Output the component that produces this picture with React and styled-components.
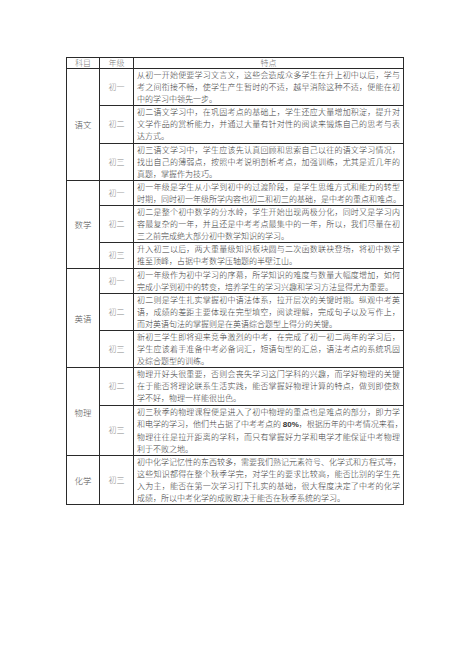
import React from "react";
import styled, { createGlobalStyle } from "styled-components";

const GlobalStyle = createGlobalStyle`
  html, body {
    margin: 0;
    padding: 0;
    background: #ffffff;
  }
  body {
    font-family: "Noto Sans CJK SC", "Noto Sans", sans-serif;
  }
`;

const Page = styled.div`
  width: 471px;
  height: 667px;
  padding: 57px 0 0 66px;
  box-sizing: border-box;
`;

const Table = styled.table`
  width: 338px;
  border-collapse: collapse;
  border: 1.5px solid #1a1a1a;
  table-layout: fixed;
  font-size: 8px;
  font-weight: 300;
  line-height: 12.1px;
`;

const HeadCell = styled.th`
  font-weight: 300;
  color: #777;
  height: 10px;
  line-height: 10px;
  padding: 0;
  text-align: center;
  border: 1px solid #2a2a2a;
  border-bottom-width: 1.5px;
`;

const SubjectCell = styled.td`
  color: #555;
  font-size: 8.5px;
  text-align: center;
  vertical-align: middle;
  padding: 0;
  border: 1px solid #2a2a2a;
  border-bottom-width: 1.5px;
`;

const GradeCell = styled.td`
  color: #888;
  text-align: center;
  vertical-align: middle;
  padding: 0;
  border: 1px solid #2a2a2a;
  border-bottom-width: ${(p) => (p.$last ? "1.5px" : "1px")};
`;

const TextCell = styled.td`
  color: #3a3a3a;
  padding: 0 3px 0 3px;
  border: 1px solid #2a2a2a;
  border-bottom-width: ${(p) => (p.$last ? "1.5px" : "1px")};
`;

const Line = styled.div`
  white-space: nowrap;
  text-align: justify;
  text-align-last: ${(p) => (p.$end ? "left" : "justify")};
`;

const Bold = styled.b`
  font-family: "Liberation Sans", Arial, sans-serif;
  font-weight: bold;
  color: #333;
`;

const data = [
  {
    subject: "语文",
    rows: [
      {
        grade: "初一",
        lines: [
          "从初一开始便要学习文言文，这些会造成众多学生在升上初中以后，学与",
          "考之间衔接不畅，使学生产生暂时的不适，越早消除这种不适，便能在初",
          "中的学习中领先一步。",
        ],
      },
      {
        grade: "初二",
        lines: [
          "初二语文学习中，在巩固考点的基础上，学生还应大量增加积淀，提升对",
          "文学作品的赏析能力，并通过大量有针对性的阅读来锻炼自己的思考与表",
          "达方式。",
        ],
      },
      {
        grade: "初三",
        lines: [
          "初三语文学习中，学生应该先认真回顾和思索自己以往的语文学习情况，",
          "找出自己的薄弱点，按照中考说明剖析考点，加强训练，尤其是近几年的",
          "真题，掌握作为技巧。",
        ],
      },
    ],
  },
  {
    subject: "数学",
    rows: [
      {
        grade: "初一",
        lines: [
          "初一年级是学生从小学到初中的过渡阶段，是学生思维方式和能力的转型",
          "时期，同时初一年级所学内容也初二和初三的基础，是中考的重点和难点。",
        ],
      },
      {
        grade: "初二",
        lines: [
          "初二是整个初中数学的分水岭，学生开始出现两极分化，同时又是学习内",
          "容最复杂的一年，并且还是中考考点最集中的一年，所以，我们尽量在初",
          "三之前完成绝大部分初中数学知识的学习。",
        ],
      },
      {
        grade: "初三",
        lines: [
          "升入初三以后，两大重量级知识板块圆与二次函数联袂登场，将初中数学",
          "推至顶峰，占据中考数学压轴题的半壁江山。",
        ],
      },
    ],
  },
  {
    subject: "英语",
    rows: [
      {
        grade: "初一",
        lines: [
          "初一年级作为初中学习的序幕，所学知识的难度与数量大幅度增加，如何",
          "完成小学到初中的转变，培养学生的学习兴趣和学习方法显得尤为重要。",
        ],
      },
      {
        grade: "初二",
        lines: [
          "初二则是学生扎实掌握初中语法体系，拉开层次的关键时期。纵观中考英",
          "语，成绩的差距主要体现在完型填空，阅读理解，完成句子以及写作上，",
          "而对英语句法的掌握则是在英语综合题型上得分的关键。",
        ],
      },
      {
        grade: "初三",
        lines: [
          "新初三学生即将迎来竞争激烈的中考，在完成了初一初二两年的学习后，",
          "学生应该着手准备中考必备词汇，短语句型的汇总，语法考点的系统巩固",
          "及综合题型的训练。",
        ],
      },
    ],
  },
  {
    subject: "物理",
    rows: [
      {
        grade: "初二",
        lines: [
          "物理开好头很重要，否则会丧失学习这门学科的兴趣，而学好物理的关键",
          "在于能否将理论联系生活实践，能否掌握好物理计算的特点，做到即使数",
          "学不好，物理一样能很出色。",
        ],
      },
      {
        grade: "初三",
        lines: [
          "初三秋季的物理课程便是进入了初中物理的重点也是难点的部分，即力学",
          ["和电学的学习，他们共占据了中考考点的 ", "80%", "，根据历年的中考情况来看，"],
          "物理往往是拉开距离的学科，而只有掌握好力学和电学才能保证中考物理",
          "利于不败之地。",
        ],
      },
    ],
  },
  {
    subject: "化学",
    rows: [
      {
        grade: "初三",
        lines: [
          "初中化学记忆性的东西较多，需要我们熟记元素符号、化学式和方程式等，",
          "这些知识都得在整个秋季学完，对学生的要求比较高，能否比别的学生先",
          "入为主，能否在第一次学习打下扎实的基础，很大程度决定了中考的化学",
          "成绩，所以中考化学的成败取决于能否在秋季系统的学习。",
        ],
      },
    ],
  },
];

const renderLine = (line) =>
  Array.isArray(line) ? (
    <>
      {line[0]}
      <Bold>{line[1]}</Bold>
      {line[2]}
    </>
  ) : (
    line
  );

export default function App() {
  return (
    <>
      <GlobalStyle />
      <Page>
        <Table>
          <colgroup>
            <col style={{ width: 33 }} />
            <col style={{ width: 34 }} />
            <col />
          </colgroup>
          <thead>
            <tr>
              <HeadCell>科目</HeadCell>
              <HeadCell>年级</HeadCell>
              <HeadCell>特点</HeadCell>
            </tr>
          </thead>
          <tbody>
            {data.map((group) =>
              group.rows.map((row, i) => {
                const last = i === group.rows.length - 1;
                return (
                  <tr key={group.subject + row.grade}>
                    {i === 0 && (
                      <SubjectCell rowSpan={group.rows.length}>{group.subject}</SubjectCell>
                    )}
                    <GradeCell $last={last}>{row.grade}</GradeCell>
                    <TextCell $last={last}>
                      {row.lines.map((line, j) => (
                        <Line key={j} $end={j === row.lines.length - 1}>
                          {renderLine(line)}
                        </Line>
                      ))}
                    </TextCell>
                  </tr>
                );
              })
            )}
          </tbody>
        </Table>
      </Page>
    </>
  );
}
